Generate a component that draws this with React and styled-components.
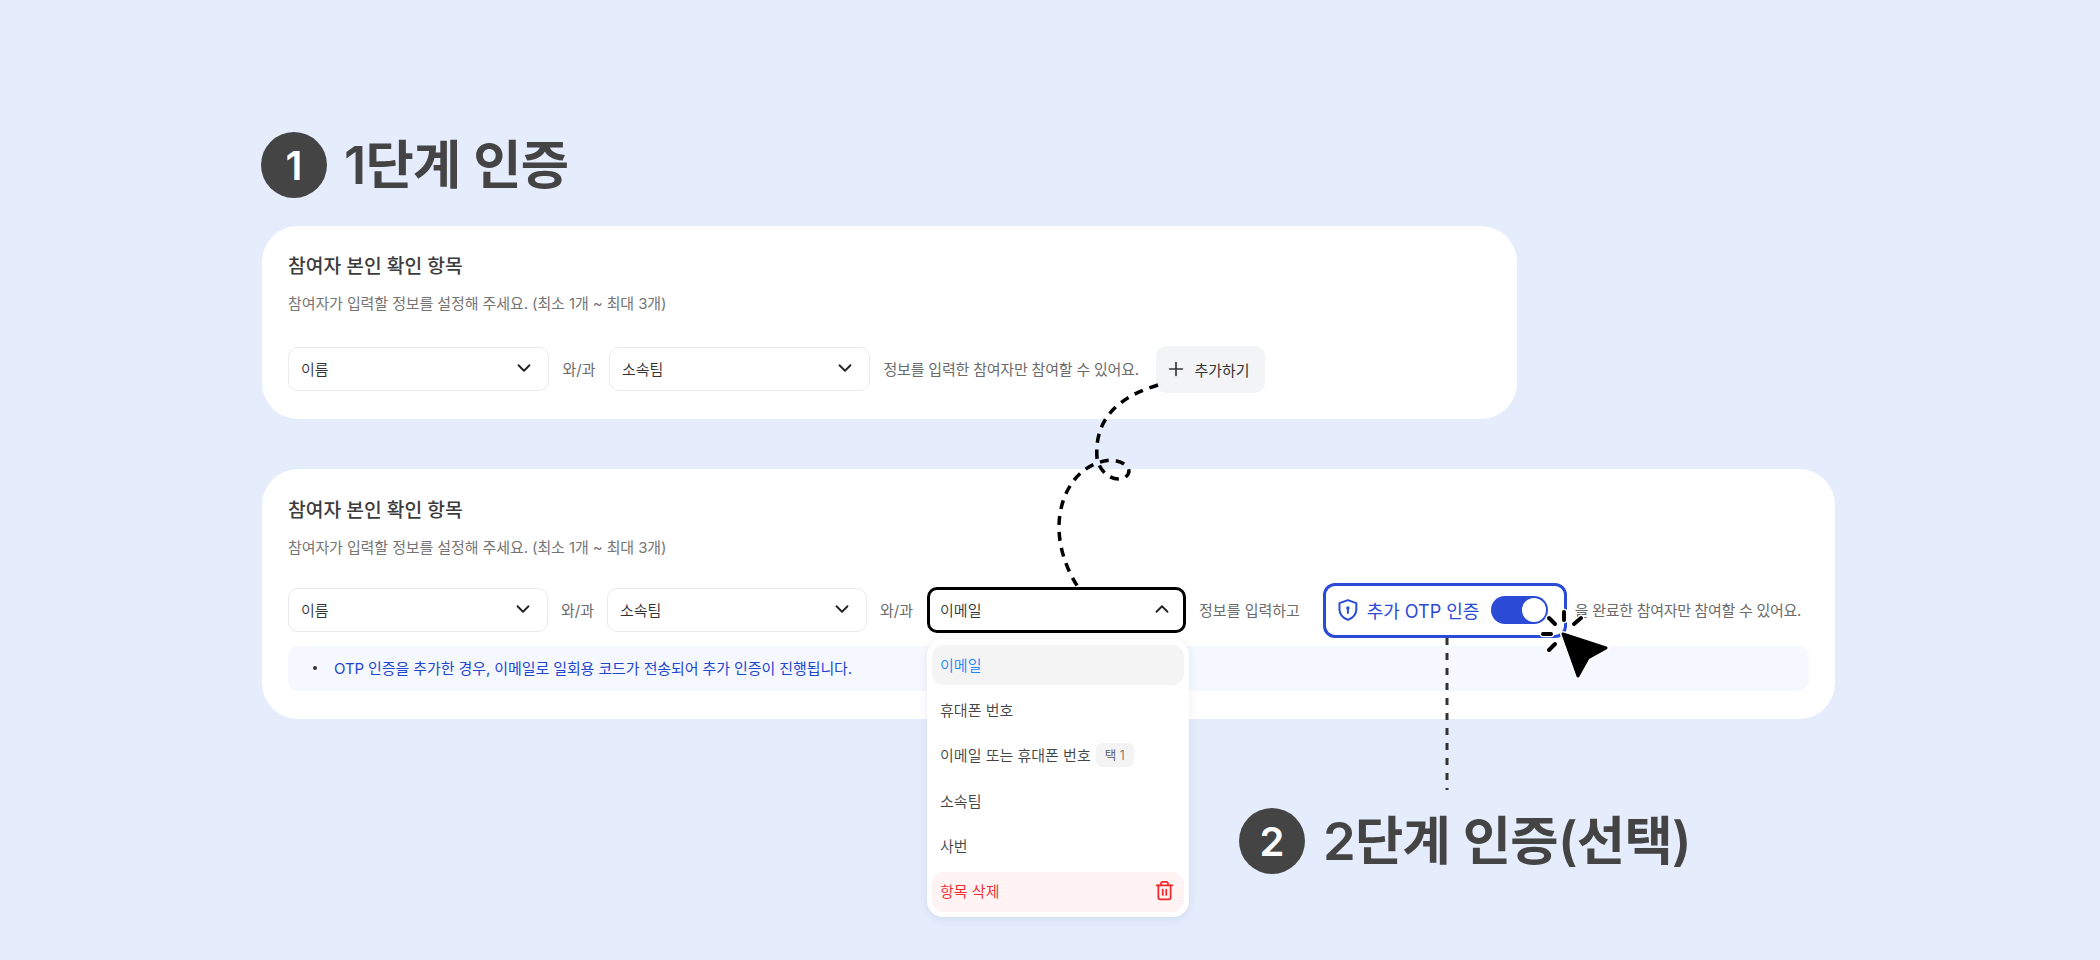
import React from 'react';
import styled, { createGlobalStyle } from 'styled-components';
import { ChevronDown, ChevronUp, Plus, Trash2 } from 'lucide-react';

const GlobalStyle = createGlobalStyle`
  html, body {
    margin: 0;
    padding: 0;
    background: #e5edfd;
  }
  * {
    box-sizing: border-box;
  }
`;

const Page = styled.div`
  position: relative;
  width: 2100px;
  height: 960px;
  overflow: hidden;
  padding: 132px 0 0 262px;
  background: #e5edfd;
  font-family: Inter, 'Noto Sans CJK KR', sans-serif;
  color: #444;
`;

const StepHeading = styled.div`
  display: flex;
  align-items: center;
  gap: ${(p) => p.$gap || 17}px;
  height: 66px;
  margin-left: ${(p) => p.$indent || -1}px;
  margin-top: ${(p) => p.$top || 0}px;
`;

const StepNumber = styled.div`
  display: flex;
  align-items: center;
  justify-content: center;
  width: 66px;
  height: 66px;
  border-radius: 50%;
  background: #444;
  color: #fff;
  font-size: 40px;
  font-weight: 600;
`;

const StepTitle = styled.h2`
  margin: 0;
  font-size: 52.5px;
  line-height: 66px;
  font-weight: 600;
  color: #444;
  letter-spacing: -0.7px;
`;

const Card = styled.section`
  width: ${(p) => p.$width}px;
  height: ${(p) => p.$height}px;
  margin-top: ${(p) => p.$top}px;
  padding: ${(p) => p.$pad}px 26px 0;
  background: #fff;
  border-radius: 36px;
`;

const CardTitle = styled.h3`
  margin: 0;
  font-size: 19.25px;
  line-height: 28px;
  font-weight: 500;
  color: #3c3c3c;
`;

const CardHint = styled.p`
  margin: 13px 0 0;
  font-size: 15px;
  line-height: 22px;
  color: #757575;
  letter-spacing: -0.1px;
`;

const Row = styled.div`
  display: flex;
  align-items: center;
  gap: ${(p) => p.$gap}px;
  height: 56px;
  margin-top: ${(p) => p.$top}px;
`;

const SelectBox = styled.div`
  position: relative;
  display: flex;
  align-items: center;
  justify-content: space-between;
  flex: none;
  width: ${(p) => p.$width}px;
  height: ${(p) => (p.$open ? 46 : 44)}px;
  margin-left: ${(p) => (p.$open ? 1 : 0)}px;
  padding: 0 ${(p) => (p.$open ? 10 : 13)}px 2px ${(p) => (p.$open ? 10 : 12)}px;
  border: ${(p) => (p.$open ? '3px solid #000' : '1px solid #eaeaea')};
  border-radius: 10px;
  background: #fff;
  font-size: 15px;
  font-weight: 350;
  color: #333;
`;

const RowText = styled.span`
  flex: none;
  padding-bottom: 2px;
  font-size: 15px;
  color: #6b6b6b;
  white-space: nowrap;
  letter-spacing: ${(p) => p.$tight || 0}px;
  margin-left: ${(p) => p.$left || 0}px;
`;

const AddButton = styled.button`
  display: flex;
  align-items: center;
  gap: 7px;
  flex: none;
  width: 109px;
  height: 47px;
  margin-left: 4px;
  padding: 0 9px;
  border: 0;
  border-radius: 10px;
  background: #f2f4f6;
  font: inherit;
  font-size: 15px;
  color: #333;
  white-space: nowrap;
`;

const OtpBox = styled.div`
  position: relative;
  display: flex;
  align-items: center;
  flex: none;
  width: 244px;
  height: 55px;
  margin-left: 10px;
  padding: 0 16px 0 11px;
  border: 3px solid #2b4bd6;
  border-radius: 12px;
  color: #2b4bd6;
  font-size: 18px;
  background: #fff;
`;

const OtpLabel = styled.span`
  margin-left: 8px;
  white-space: nowrap;
`;

const Toggle = styled.span`
  display: flex;
  align-items: center;
  justify-content: flex-end;
  width: 57px;
  height: 28px;
  margin-left: 12px;
  padding-right: 2px;
  border-radius: 14px;
  background: #2b4bd6;
`;

const ToggleKnob = styled.span`
  width: 24px;
  height: 24px;
  border-radius: 50%;
  background: #fff;
`;

const Notice = styled.div`
  display: flex;
  align-items: center;
  gap: 17px;
  width: 1521px;
  height: 45px;
  margin-top: 8px;
  padding: 0 0 2px 25px;
  border-radius: 10px;
  background: #f5f9ff;
  font-size: 15px;
  color: #1f46d0;
  letter-spacing: -0.1px;
`;

const NoticeDot = styled.span`
  width: 4px;
  height: 4px;
  border-radius: 50%;
  background: #333;
`;

const Menu = styled.div`
  position: absolute;
  top: 49px;
  left: -3px;
  width: 262px;
  padding: 6px 5px 5px;
  display: flex;
  flex-direction: column;
  gap: 5.4px;
  background: #fff;
  border-radius: 16px;
  box-shadow: 0 2px 10px rgba(40, 60, 110, 0.1);
  z-index: 3;
`;

const MenuItem = styled.div`
  display: flex;
  align-items: center;
  justify-content: space-between;
  height: 40px;
  padding: 0 9px 2px 8px;
  border-radius: 12px;
  font-size: 15px;
  font-weight: 350;
  color: ${(p) => (p.$danger ? '#f0282d' : p.$active ? '#1a85ff' : '#444')};
  background: ${(p) => (p.$danger ? '#fff3f3' : p.$active ? '#f4f4f4' : 'transparent')};
`;

const MenuLabel = styled.span`
  display: flex;
  align-items: center;
  gap: 5px;
`;

const Badge = styled.span`
  display: inline-flex;
  align-items: center;
  justify-content: center;
  width: 38px;
  height: 24px;
  border-radius: 6px;
  background: #f4f4f4;
  font-size: 12.5px;
  color: #555;
`;

const Overlay = styled.svg`
  position: absolute;
  left: 0;
  top: 0;
  width: 2100px;
  height: 960px;
  pointer-events: none;
  z-index: 4;
`;

const ShieldIcon = () => (
  <svg width="22" height="24" viewBox="0 0 22 24" fill="none" stroke="#2b4bd6" strokeWidth="2" strokeLinejoin="round">
    <path d="M11 2 L19.5 5 V11.5 C19.5 16.5 16 20 11 22 C6 20 2.5 16.5 2.5 11.5 V5 Z" />
    <circle cx="11" cy="10" r="1.7" fill="#2b4bd6" stroke="none" />
    <path d="M11 10 V15" strokeLinecap="round" />
  </svg>
);

const Identity = ({ compact }) => {
  const w = compact ? 260 : 261;
  return (
    <>
      <SelectBox $width={w}>
        이름
        <ChevronDown size={22} color="#222" />
      </SelectBox>
      <RowText>와/과</RowText>
      <SelectBox $width={w}>
        소속팀
        <ChevronDown size={22} color="#222" />
      </SelectBox>
    </>
  );
};

const menuItems = ['휴대폰 번호', '이메일 또는 휴대폰 번호', '소속팀', '사번'];

const sparks = ['M1564 612 V620', 'M1549 618 L1555 624', 'M1574 624 L1581 618', 'M1543 634 H1551', 'M1549 650 L1555 644'];
const arrow = 'M1563 634 L1606 648 L1588 658 L1578 676 Z';

export default function App() {
  return (
    <Page>
      <GlobalStyle />
      <StepHeading>
        <StepNumber>1</StepNumber>
        <StepTitle>1단계 인증</StepTitle>
      </StepHeading>

      <Card $width={1255} $height={193} $top={28} $pad={26}>
        <CardTitle>참여자 본인 확인 항목</CardTitle>
        <CardHint>참여자가 입력할 정보를 설정해 주세요. (최소 1개 ~ 최대 3개)</CardHint>
        <Row $top={26} $gap={13.5}>
          <Identity />
          <RowText $tight={-0.2}>정보를 입력한 참여자만 참여할 수 있어요.</RowText>
          <AddButton>
            <Plus size={22} strokeWidth={1.8} />
            추가하기
          </AddButton>
        </Row>
      </Card>

      <Card $width={1573} $height={250} $top={50} $pad={27}>
        <CardTitle>참여자 본인 확인 항목</CardTitle>
        <CardHint>참여자가 입력할 정보를 설정해 주세요. (최소 1개 ~ 최대 3개)</CardHint>
        <Row $top={23} $gap={13}>
          <Identity compact />
          <RowText>와/과</RowText>
          <SelectBox $width={259} $open>
            이메일
            <ChevronUp size={22} color="#222" />
            <Menu>
              <MenuItem $active>이메일</MenuItem>
              {menuItems.map((item) => (
                <MenuItem key={item}>
                  <MenuLabel>
                    {item}
                    {item.includes('또는') && <Badge>택 1</Badge>}
                  </MenuLabel>
                </MenuItem>
              ))}
              <MenuItem $danger>
                항목 삭제
                <Trash2 size={21} color="#f0282d" strokeWidth={2} />
              </MenuItem>
            </Menu>
          </SelectBox>
          <RowText>정보를 입력하고</RowText>
          <OtpBox>
            <ShieldIcon />
            <OtpLabel>추가 OTP 인증</OtpLabel>
            <Toggle>
              <ToggleKnob />
            </Toggle>
          </OtpBox>
          <RowText $left={-5} $tight={-0.3}>
            을 완료한 참여자만 참여할 수 있어요.
          </RowText>
        </Row>
        <Notice>
          <NoticeDot />
          OTP 인증을 추가한 경우, 이메일로 일회용 코드가 전송되어 추가 인증이 진행됩니다.
        </Notice>
      </Card>

      <StepHeading $indent={977} $top={89} $gap={18}>
        <StepNumber>2</StepNumber>
        <StepTitle>2단계 인증(선택)</StepTitle>
      </StepHeading>

      <Overlay viewBox="0 0 2100 960" fill="none">
        <path
          d="M1158 385 C1122 396 1094 416 1097 458 C1100 474 1114 482 1124 478 C1134 472 1128 462 1112 460 C1078 462 1059 494 1059 527 C1059 550 1068 572 1078 587"
          stroke="#000"
          strokeWidth="3.5"
          strokeDasharray="9 7"
        />
        <path d="M1447 638 V790" stroke="#333" strokeWidth="3" strokeDasharray="7 8" />
        <g strokeLinecap="round">
          {sparks.map((d) => (
            <path key={d} d={d} stroke="#fff" strokeWidth="6.5" />
          ))}
          {sparks.map((d) => (
            <path key={`${d}-ink`} d={d} stroke="#000" strokeWidth="4" />
          ))}
        </g>
        <path d={arrow} fill="#000" stroke="#fff" strokeWidth="6" strokeLinejoin="round" />
        <path d={arrow} fill="#000" stroke="#000" strokeWidth="3" strokeLinejoin="round" />
      </Overlay>
    </Page>
  );
}
